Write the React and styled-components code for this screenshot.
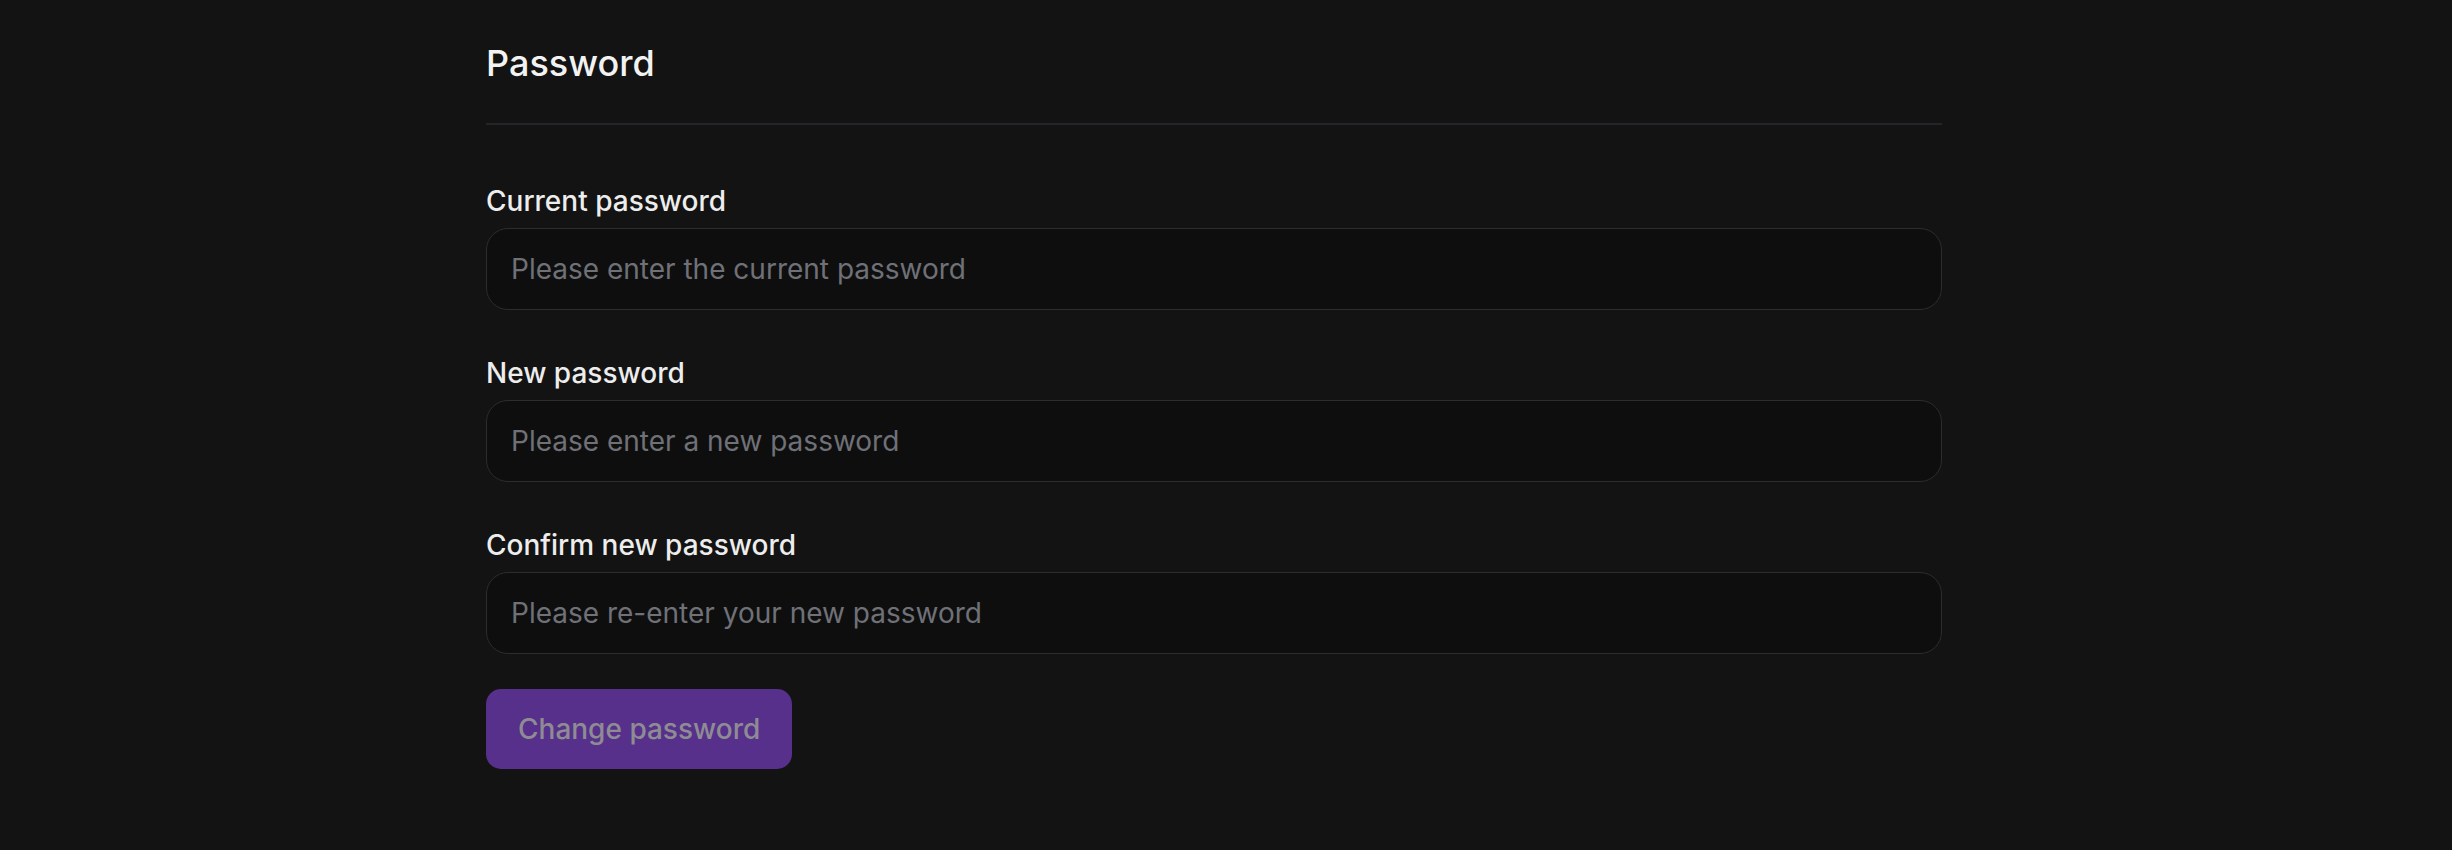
import styled, { createGlobalStyle } from "styled-components"

const GlobalStyle = createGlobalStyle`
    html, body {
        margin: 0;
        padding: 0;
        background: #131313;
        font-family: Inter, "Noto Sans", sans-serif;
        color: #ededed;
    }
    * {
        box-sizing: border-box;
    }
`

const fields = [
    { id: 'current', label: 'Current password', placeholder: 'Please enter the current password' },
    { id: 'new', label: 'New password', placeholder: 'Please enter a new password' },
    { id: 'confirm', label: 'Confirm new password', placeholder: 'Please re-enter your new password' },
]

export default function App() {
    return (
        <>
            <GlobalStyle />
            <Page>
                <Section>
                    <Title>Password</Title>
                    <Divider />
                    <Form onSubmit={(e) => e.preventDefault()}>
                        <FieldList>
                            {fields.map((f) => (
                                <Field key={f.id}>
                                    <Label htmlFor={f.id}>{f.label}</Label>
                                    <Input id={f.id} type="password" placeholder={f.placeholder} />
                                </Field>
                            ))}
                        </FieldList>
                        <SubmitButton type="submit" disabled>Change password</SubmitButton>
                    </Form>
                </Section>
            </Page>
        </>
    )
}

const Page = styled.main`
    min-height: 850px;
    padding: 42px 0 0 486px;
`

const Section = styled.section`
    width: 1456px;
    display: flex;
    flex-direction: column;
`

const Title = styled.h1`
    margin: 0 0 38px 0;
    font-size: 36px;
    line-height: 1.2;
    font-weight: 450;
    color: #f2f2f2;
`

const Divider = styled.hr`
    margin: 0 0 56px 0;
    border: none;
    height: 2px;
    background: #252529;
`

const Form = styled.form`
    display: flex;
    flex-direction: column;
    align-items: flex-start;
`

const FieldList = styled.div`
    width: 100%;
    display: flex;
    flex-direction: column;
    gap: 43px;
`

const Field = styled.div`
    display: flex;
    flex-direction: column;
    gap: 7px;
`

const Label = styled.label`
    font-size: 28px;
    line-height: 40px;
    font-weight: 500;
    color: #ededed;
`

const Input = styled.input`
    width: 100%;
    height: 82px;
    padding: 0 24px;
    background: #0e0e0f;
    border: 1.5px solid #2c2c31;
    border-radius: 22px;
    font-family: Inter, "Noto Sans", sans-serif;
    font-size: 28px;
    color: #ededed;
    outline: none;
    &::placeholder {
        color: #6f7177;
        opacity: 1;
    }
`

const SubmitButton = styled.button`
    margin-top: 35px;
    height: 80px;
    padding: 0 32px;
    border: none;
    border-radius: 15px;
    background: #57308c;
    font-family: Inter, "Noto Sans", sans-serif;
    font-size: 28px;
    font-weight: 500;
    color: #8e8c93;
    cursor: not-allowed;
`
